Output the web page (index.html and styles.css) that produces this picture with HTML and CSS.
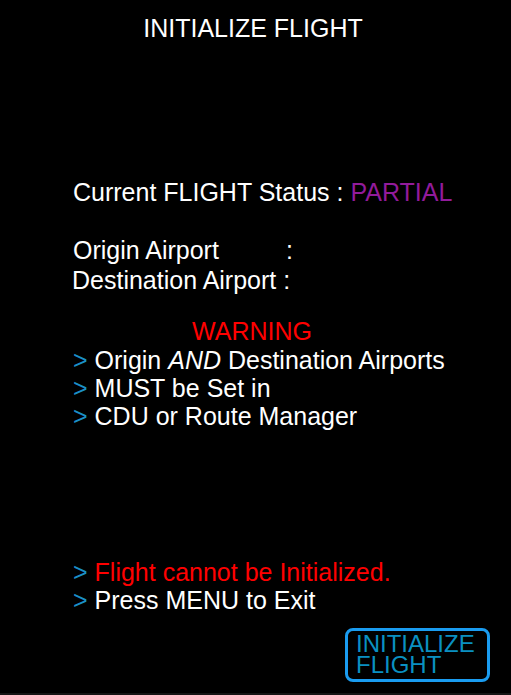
FILE: index.html
```html
<!DOCTYPE html>
<html>
<head>
<meta charset="utf-8">
<link rel="stylesheet" href="styles.css">
</head>
<body>
<div class="screen">
  <div class="title">INITIALIZE FLIGHT</div>
  <div class="status">Current FLIGHT Status : <span class="purple">PARTIAL</span></div>
  <div class="airports">
    <div class="row origin"><span class="label">Origin Airport</span>:</div>
    <div class="row dest">Destination Airport :</div>
  </div>
  <div class="warning">WARNING</div>
  <div class="list">
    <div class="item"><span class="chev">&gt;</span> Origin <i>AND</i> Destination Airports</div>
    <div class="item"><span class="chev">&gt;</span> MUST be Set in</div>
    <div class="item"><span class="chev">&gt;</span> CDU or Route Manager</div>
  </div>
  <div class="list bottom">
    <div class="item"><span class="chev">&gt;</span> <span class="red">Flight cannot be Initialized.</span></div>
    <div class="item"><span class="chev">&gt;</span> Press MENU to Exit</div>
  </div>
  <div class="btnrow">
    <div class="btn"><div class="btnline">INITIALIZE</div><div class="btnline">FLIGHT</div></div>
  </div>
</div>
</body>
</html>
```
FILE: styles.css
```css
html, body {
  margin: 0;
  padding: 0;
  background: #000;
}
.screen {
  width: 511px;
  height: 693px;
  background: #000;
  border-bottom: 2px solid #151515;
  display: flex;
  flex-direction: column;
  font-family: "Liberation Sans", Arial, sans-serif;
  font-size: 25px;
  line-height: 28px;
  color: #fff;
  overflow: hidden;
}
.title {
  margin-top: 14px;
  text-align: center;
  padding-right: 5px;
}
.status {
  margin-top: 136px;
  padding-left: 73px;
}
.purple { color: #921b9b; }
.airports {
  margin-top: 30px;
  padding-left: 73px;
  display: flex;
  flex-direction: column;
  gap: 2px;
}
.label {
  display: inline-block;
  width: 213px;
}
.dest { margin-left: -1px; }
.warning {
  margin-top: 23px;
  color: #ff0000;
  text-align: center;
  padding-right: 7px;
}
.list {
  margin-top: 1px;
  padding-left: 73px;
}
.list.bottom {
  margin-top: 128px;
}
.chev {
  color: #1b8fc7;
}
.red { color: #ff0000; }
.btnrow {
  margin-top: 14px;
  display: flex;
  justify-content: flex-end;
  padding-right: 21px;
}
.btn {
  width: 131px;
  height: 46px;
  border: 3px solid #1a9cf0;
  border-radius: 8px;
  color: #0a90c2;
  font-size: 24px;
  padding: 2px 0 0 8px;
  display: flex;
  flex-direction: column;
}
.btnline {
  height: 21px;
  line-height: 21px;
}
```
